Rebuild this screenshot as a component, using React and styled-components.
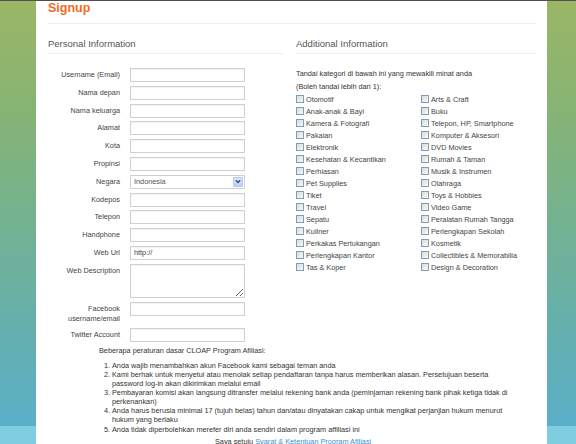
import React from 'react';
import styled, { createGlobalStyle } from 'styled-components';

const GlobalStyle = createGlobalStyle`
  html, body {
    margin: 0;
    padding: 0;
  }
  body {
    min-height: 444px;
    font-family: "Liberation Sans", Arial, sans-serif;
    background: linear-gradient(
      to bottom,
      #9bb664 0px,
      #86b474 110px,
      #74b290 220px,
      #66b0ac 320px,
      #5aafc8 426px,
      #7fcde0 426px,
      #7fcde0 100%
    );
    overflow: hidden;
  }
`;

const TopLine = styled.div`
  height: 1px;
  background: #505050;
`;

const Page = styled.div`
  width: 488px;
  margin-left: 36px;
  padding: 0 11px 0 12px;
  min-height: 443px;
  background: #fff;
`;

const Title = styled.h1`
  margin: 0;
  padding-bottom: 8px;
  font-size: 12.5px;
  line-height: 14px;
  font-weight: bold;
  color: #f26a1f;
  border-bottom: 1px solid #eeeeee;
`;

const Columns = styled.div`
  display: grid;
  grid-template-columns: 236px 240px;
  column-gap: 12px;
`;

const SectionTitle = styled.h2`
  margin: 14px 0 0;
  padding-bottom: 3px;
  font-size: 9.5px;
  line-height: 12px;
  font-weight: normal;
  color: #555;
  border-bottom: 1px solid #eeeeee;
`;

const Form = styled.div`
  display: grid;
  grid-template-columns: 72px 115px;
  column-gap: 10px;
  row-gap: 3.8px;
  margin-top: 14px;
`;

const Label = styled.label`
  font-size: 7.3px;
  line-height: ${(p) => (p.$double ? '10.5px' : '14px')};
  padding-top: ${(p) => (p.$double ? '2px' : '0')};
  color: #444;
  text-align: right;
`;

const Input = styled.input`
  box-sizing: border-box;
  width: 115px;
  height: 14px;
  margin: 0;
  padding: 0 3px;
  border: 1px solid #d0d0d0;
  box-shadow: inset 0 1px 1px rgba(0, 0, 0, 0.05);
  font-family: inherit;
  font-size: 7.3px;
  color: #444;
  outline: none;
`;

const TextArea = styled.textarea`
  box-sizing: border-box;
  width: 115px;
  height: 34px;
  margin: 0;
  border: 1px solid #d0d0d0;
  box-shadow: inset 0 1px 1px rgba(0, 0, 0, 0.05);
  font-family: inherit;
  font-size: 7.3px;
  outline: none;
`;

const SelectBox = styled.div`
  box-sizing: border-box;
  display: flex;
  align-items: center;
  width: 115px;
  height: 14px;
  padding-right: 1px;
  border: 1px solid #d0d0d0;
`;

const Select = styled.select`
  flex: 1;
  appearance: none;
  border: none;
  background: transparent;
  padding: 0 0 0 3px;
  height: 12px;
  font-family: inherit;
  font-size: 7.3px;
  color: #555;
  outline: none;
`;

const ArrowButton = styled.span`
  box-sizing: border-box;
  display: flex;
  align-items: center;
  justify-content: center;
  width: 10px;
  height: 10px;
  border: 1px solid #b3c6e6;
  border-radius: 1px;
  background: linear-gradient(#dfe9fb, #bcd0f3);
`;

const Intro = styled.p`
  margin: 13px 0 0;
  font-size: 7.3px;
  line-height: 13px;
  color: #333;
`;

const CheckGrid = styled.div`
  display: grid;
  grid-template-columns: 125px 1fr;
  grid-template-rows: repeat(15, 12px);
  grid-auto-flow: column;
`;

const CheckRow = styled.label`
  display: flex;
  align-items: center;
  gap: 2px;
  font-size: 7.3px;
  color: #444;
`;

const Box = styled.input`
  appearance: none;
  box-sizing: border-box;
  width: 8px;
  height: 8px;
  margin: 0 0 0 0;
  border: 1px solid #7f9db9;
  background: linear-gradient(135deg, #dcdcd6, #f8f8f6);
`;

const Notes = styled.div`
  margin-top: 4px;
  padding-left: 51px;
  font-size: 7.3px;
  line-height: 9.15px;
  color: #333;
`;

const NoteTitle = styled.div``;

const Rules = styled.ol`
  margin: 5px 0 0;
  padding-left: 13px;
  white-space: nowrap;
`;

const Agree = styled.div`
  margin-top: 3px;
  padding-left: 116px;
  white-space: nowrap;
`;

const Link = styled.a`
  color: #3d8fd1;
  text-decoration: none;
`;

const leftCats = [
  'Otomotif', 'Anak-anak & Bayi', 'Kamera & Fotografi', 'Pakaian', 'Elektronik',
  'Kesehatan & Kecantikan', 'Perhiasan', 'Pet Supplies', 'Tiket', 'Travel',
  'Sepatu', 'Kuliner', 'Perkakas Pertukangan', 'Perlengkapan Kantor', 'Tas & Koper',
];

const rightCats = [
  'Arts & Craft', 'Buku', 'Telepon, HP, Smartphone', 'Komputer & Aksesori', 'DVD Movies',
  'Rumah & Taman', 'Musik & Instrumen', 'Olahraga', 'Toys & Hobbies', 'Video Game',
  'Peralatan Rumah Tangga', 'Perlengkapan Sekolah', 'Kosmetik',
  'Collectibles & Memorabilia', 'Design & Decoration',
];

const fields = [
  'Username (Email)', 'Nama depan', 'Nama keluarga', 'Alamat', 'Kota', 'Propinsi',
];

const fields2 = ['Kodepos', 'Telepon', 'Handphone'];

function App() {
  return (
    <>
      <GlobalStyle />
      <TopLine />
      <Page>
        <Title>Signup</Title>
        <Columns>
          <div>
            <SectionTitle>Personal Information</SectionTitle>
            <Form>
              {fields.map((f) => (
                <React.Fragment key={f}>
                  <Label>{f}</Label>
                  <Input type="text" />
                </React.Fragment>
              ))}
              <Label>Negara</Label>
              <SelectBox>
                <Select defaultValue="Indonesia">
                  <option>Indonesia</option>
                </Select>
                <ArrowButton>
                  <svg width="6" height="5" viewBox="0 0 6 5">
                    <path d="M0.8 1.2 L3 3.4 L5.2 1.2" fill="none" stroke="#2b4f8f" strokeWidth="1.4" />
                  </svg>
                </ArrowButton>
              </SelectBox>
              {fields2.map((f) => (
                <React.Fragment key={f}>
                  <Label>{f}</Label>
                  <Input type="text" />
                </React.Fragment>
              ))}
              <Label>Web Url</Label>
              <Input type="text" defaultValue="http://" />
              <Label>Web Description</Label>
              <TextArea />
              <Label $double>Facebook<br />username/email</Label>
              <Input type="text" />
              <Label>Twitter Account</Label>
              <Input type="text" />
            </Form>
          </div>
          <div>
            <SectionTitle>Additional Information</SectionTitle>
            <Intro>
              Tandai kategori di bawah ini yang mewakili minat anda<br />
              (Boleh tandai lebih dari 1):
            </Intro>
            <CheckGrid>
              {[...leftCats, ...rightCats].map((c) => (
                <CheckRow key={c}>
                  <Box type="checkbox" />
                  {c}
                </CheckRow>
              ))}
            </CheckGrid>
          </div>
        </Columns>
        <Notes>
          <NoteTitle>Beberapa peraturan dasar CLOAP Program Afiliasi:</NoteTitle>
          <Rules>
            <li>Anda wajib menambahkan akun Facebook kami sebagai teman anda</li>
            <li>
              Kami berhak untuk menyetui atau menolak setiap pendaftaran tanpa harus memberikan alasan. Persetujuan beserta<br />
              password log-in akan dikirimkan melalui email
            </li>
            <li>
              Pembayaran komisi akan langsung ditransfer melalui rekening bank anda (peminjaman rekening bank pihak ketiga tidak di<br />
              perkenankan)
            </li>
            <li>
              Anda harus berusia minimal 17 (tujuh belas) tahun dan/atau dinyatakan cakap untuk mengikat perjanjian hukum menurut<br />
              hukum yang berlaku
            </li>
            <li>Anda tidak diperbolehkan merefer diri anda sendiri dalam program affiliasi ini</li>
          </Rules>
          <Agree>
            Saya setuju <Link href="#">Syarat &amp; Ketentuan Program Afiliasi</Link>
          </Agree>
        </Notes>
      </Page>
    </>
  );
}

export default App;
